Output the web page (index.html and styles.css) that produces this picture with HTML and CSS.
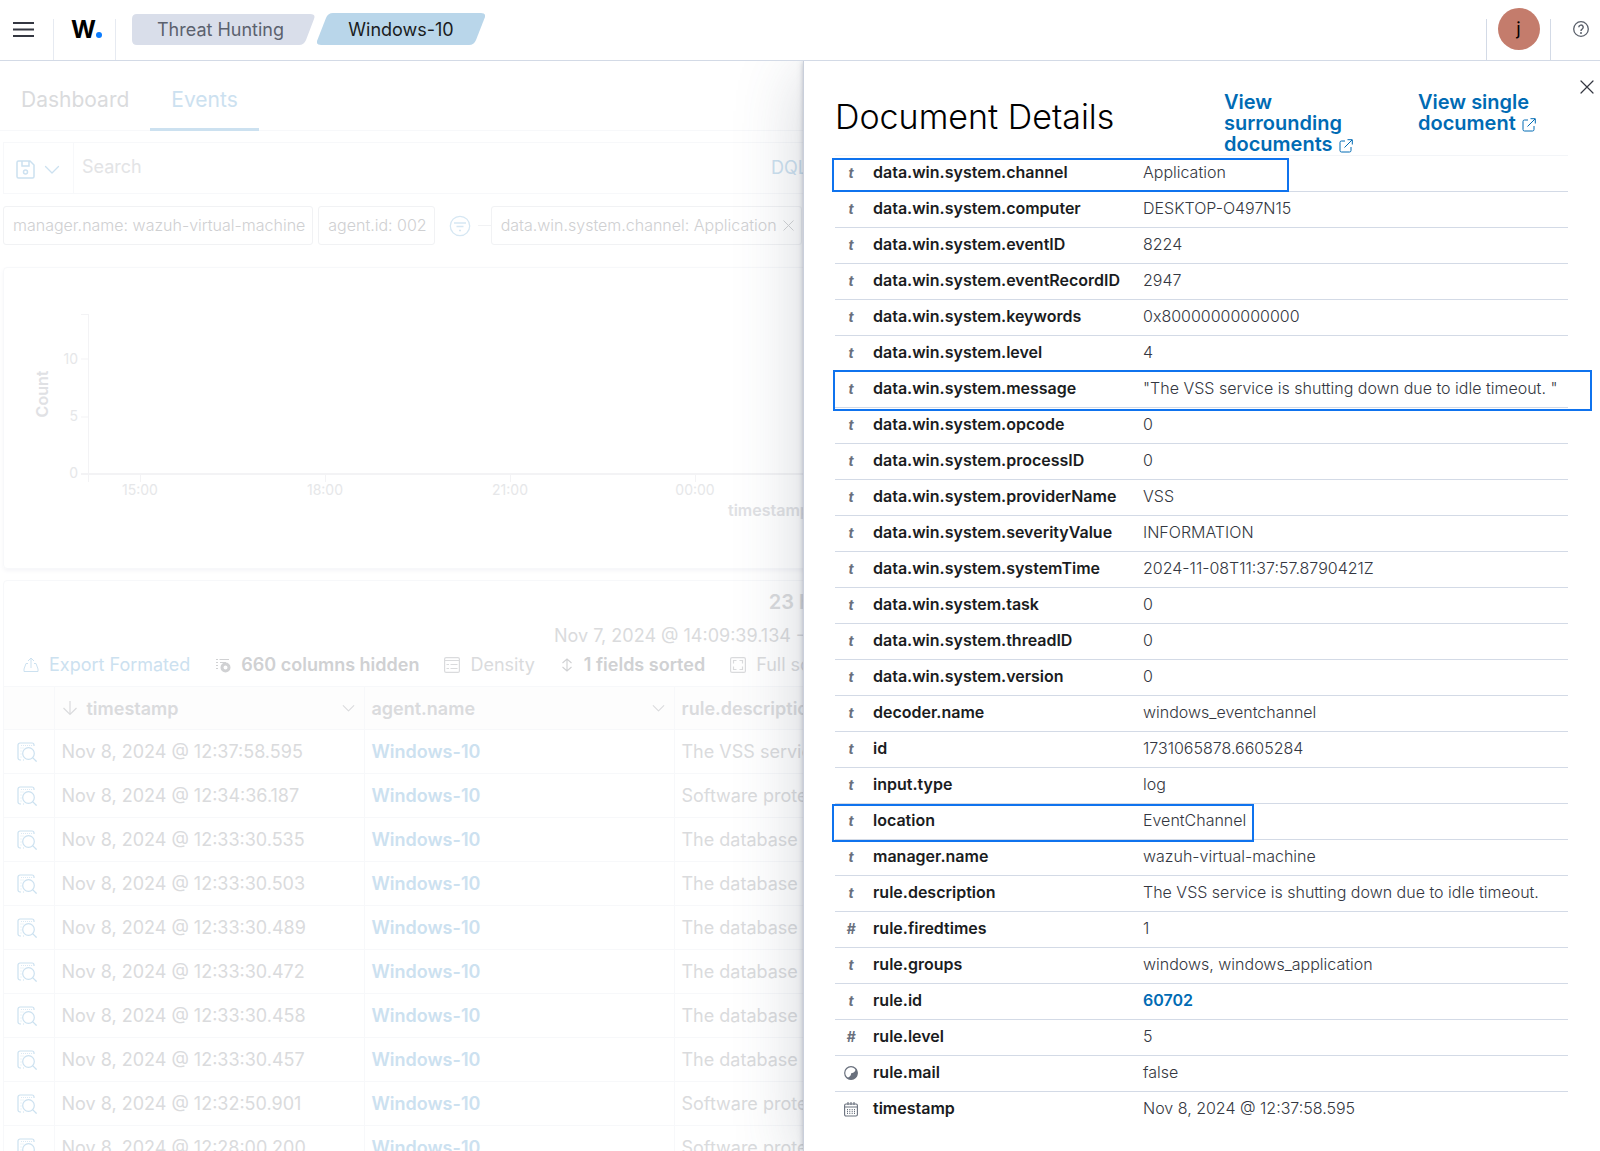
FILE: index.html
```html
<!DOCTYPE html>
<html lang="en">
<head>
<meta charset="utf-8">
<title>Threat Hunting - Windows-10</title>
<link rel="stylesheet" href="styles.css">
</head>
<body>
<svg class="sprite" aria-hidden="true">
  <symbol id="i-inspect" viewBox="0 0 20 20"><path d="M4 18H3a2 2 0 0 1-2-2V3a2 2 0 0 1 2-2h12a2 2 0 0 1 2 2v1M7 18H6" fill="none" stroke="currentColor" stroke-width="1.200"/><path d="M4 3.500h1m1 0h1m1 0h1m1 0h1m1 0h1m1 0h1M3.500 6h1m1 0h1M3.500 9h1M3.500 12h1M3.500 15h1" stroke="currentColor" stroke-width="1" opacity=".7"/><circle cx="11.500" cy="11.500" r="5.800" fill="none" stroke="currentColor" stroke-width="1.200"/><path d="m15.600 15.600 4 4" stroke="currentColor" stroke-width="1.300"/></symbol>
  <symbol id="i-chev" viewBox="0 0 16 10"><path d="m1.500 1.500 6.500 6.500 6.500-6.500" fill="none" stroke="currentColor" stroke-width="1.300" stroke-linecap="round" stroke-linejoin="round"/></symbol>
  <symbol id="i-out" viewBox="0 0 14 14"><path d="M6 2H2.500A1.500 1.500 0 0 0 1 3.500v8A1.500 1.500 0 0 0 2.500 13h8a1.500 1.500 0 0 0 1.500-1.500V8M8.500.7h4.800v4.800M13 1 5.500 8.500" fill="none" stroke="currentColor"/></symbol>
  <symbol id="i-x" viewBox="0 0 14 14"><path d="m1 1 12 12M13 1 1 13" fill="none" stroke="currentColor" stroke-width="1.200" stroke-linecap="round"/></symbol>
</svg>

<header class="top">
  <button class="menu" aria-label="Menu"><svg width="22" height="18" viewBox="0 0 22 18"><path d="M0 2h21M0 8.500h21M0 15h21" stroke="#343741" stroke-width="2"/></svg></button>
  <a class="logo" href="#" aria-label="Home">W<i></i></a>
  <nav class="crumbs">
    <a class="crumb" href="#"><svg viewBox="0 0 183 32" preserveAspectRatio="none"><path d="M5 1h173q6 0 4 5l-8 21q-2 5-7 5H5q-5 0-5-5V6q0-5 5-5z" fill="#d9deea"/></svg><span>Threat Hunting</span></a>
    <a class="crumb on" href="#"><svg viewBox="0 0 168 32" preserveAspectRatio="none"><path d="M16 0h148q5 0 4 4l-9 23q-2 5-7 5H4q-5 0-4-4L9 5q2-5 7-5z" fill="#b9d6ea"/></svg><span>Windows-10</span></a>
  </nav>
  <button class="user" aria-label="User"><span class="avatar">j</span></button>
  <button class="help" aria-label="Help"><svg width="16" height="16" viewBox="0 0 16 16"><circle cx="8" cy="8" r="7.300" fill="none" stroke="#5a606b" stroke-width="1.300"/><path d="M5.800 6.300a2.200 2.200 0 1 1 3.300 1.900Q8 8.800 8 9.900" fill="none" stroke="#5a606b" stroke-width="1.500"/><circle cx="8" cy="12" r="1" fill="#5a606b"/></svg></button>
</header>

<main class="page">
  <nav class="tabs"><a href="#">Dashboard</a><a class="on" href="#">Events</a></nav>

  <div class="search">
    <button class="saved" aria-label="Saved queries">
      <svg width="19" height="19" viewBox="0 0 19 19"><path d="M2.500 1H14l4 4v11.500a1.500 1.500 0 0 1-1.500 1.500h-14A1.500 1.500 0 0 1 1 16.500v-14A1.500 1.500 0 0 1 2.500 1zM6 1v5h7V1" fill="none" stroke="currentColor" stroke-width="1.500"/><circle cx="9.500" cy="12" r="2" fill="none" stroke="currentColor" stroke-width="1.500"/></svg>
      <svg width="16" height="10"><use href="#i-chev"/></svg>
    </button>
    <input type="text" placeholder="Search" aria-label="Search">
    <button class="dql">DQL</button>
  </div>

  <div class="filters">
    <span class="pill">manager.name: wazuh-virtual-machine</span>
    <span class="pill">agent.id: 002</span>
    <button class="fbtn" aria-label="Filter options"><svg width="22" height="22" viewBox="0 0 22 22"><circle cx="11" cy="11" r="9.700" fill="none" stroke="currentColor" stroke-width="1.300"/><path d="M5 8h12M7.500 11.500h7M10 15.500h2" stroke="currentColor" stroke-width="1.500"/></svg></button>
    <span class="dash"></span>
    <span class="pill">data.win.system.channel: Application <button aria-label="Remove filter"><svg width="11" height="11"><use href="#i-x"/></svg></button></span>
  </div>

  <section class="card chart">
    <svg width="1400" height="300" viewBox="0 0 1400 300">
      <path d="M84.500 46v160M77 46.500h7M77 91h7M77 149h7" stroke="#f3f3f5" fill="none"/>
      <path d="M77 206h1323" stroke="#f3f3f5" stroke-width="2"/>
      <path d="M84.500 206v8M136.500 206v8M321.500 206v8M506.500 206v8M691.500 206v8" stroke="#f3f3f5"/>
      <g class="tick"><text x="74" y="96" text-anchor="end">10</text><text x="74" y="153" text-anchor="end">5</text><text x="74" y="210" text-anchor="end">0</text></g>
      <g class="tick"><text x="136" y="227" text-anchor="middle">15:00</text><text x="321" y="227" text-anchor="middle">18:00</text><text x="506" y="227" text-anchor="middle">21:00</text><text x="691" y="227" text-anchor="middle">00:00</text></g>
      <g class="axis"><text x="-126" y="44" transform="rotate(-90)" text-anchor="middle">Count</text><text x="724" y="248">timestamp</text></g>
    </svg>
  </section>

  <section class="card grid">
    <h2>23 hits</h2>
    <p class="range">Nov 7, 2024 @ 14:09:39.134 - Nov 8, 2024 @ 14:09:39.134</p>
    <div class="tools">
      <button class="blue"><svg width="16" height="16" viewBox="0 0 16 16"><path d="M5 6.500H3L1 12v2.500h14V12l-2-5.500h-2M8 11V1M5 4l3-3 3 3" fill="none" stroke="currentColor"/></svg>Export Formated</button>
      <button class="strong"><svg width="16" height="16" viewBox="0 0 16 16"><path d="M1 2.500h2m1.500 0H14M1 5.500h2M1 8.500h2M1 11.500h2M5 5.500h6" stroke="currentColor" stroke-width="1.200"/><circle cx="10.500" cy="10.500" r="3.500" fill="none" stroke="currentColor" stroke-width="3"/></svg>660 columns hidden</button>
      <button><svg width="16" height="16" viewBox="0 0 16 16"><rect x=".6" y=".6" width="14.800" height="14.800" rx="1.500" fill="none" stroke="currentColor" stroke-width="1.200"/><path d="M1 3.500h14M2.500 7.500H5M6.500 7.500h7M2.500 11.500H5M6.500 11.500h7" stroke="currentColor"/></svg>Density</button>
      <button class="strong"><svg width="14" height="16" viewBox="0 0 14 16"><path d="M7 2.500v11M2.500 6 7 2l4.500 4M2.500 10 7 14l4.500-4" fill="none" stroke="currentColor" stroke-width="1.100"/></svg>1 fields sorted</button>
      <button><svg width="16" height="16" viewBox="0 0 16 16"><rect x=".6" y=".6" width="14.800" height="14.800" rx="1.500" fill="none" stroke="currentColor" stroke-width="1.200"/><path d="M3.500 6.500v-3h3M9.500 3.500h3v3M12.500 9.500v3h-3M6.500 12.500h-3v-3" fill="none" stroke="currentColor" stroke-width="1.200"/></svg>Full screen</button>
    </div>
    <table class="events">
      <colgroup><col class="c-act"><col class="c-std"><col class="c-std"><col></colgroup>
      <thead><tr><th></th>
        <th><div><svg width="16" height="16" viewBox="0 0 16 16"><path d="M8 1v13.500M1.500 8 8 14.500 14.500 8" fill="none" stroke="currentColor" stroke-width="1.200"/></svg>timestamp<svg class="end" width="13" height="9"><use href="#i-chev"/></svg></div></th>
        <th><div>agent.name<svg class="end" width="13" height="9"><use href="#i-chev"/></svg></div></th>
        <th><div>rule.description</div></th></tr></thead>
      <tbody>
        <tr><td><svg width="20" height="20"><use href="#i-inspect"/></svg></td><td>Nov 8, 2024 @ 12:37:58.595</td><td><a href="#">Windows-10</a></td><td>The VSS service</td></tr>
        <tr><td><svg width="20" height="20"><use href="#i-inspect"/></svg></td><td>Nov 8, 2024 @ 12:34:36.187</td><td><a href="#">Windows-10</a></td><td>Software protection</td></tr>
        <tr><td><svg width="20" height="20"><use href="#i-inspect"/></svg></td><td>Nov 8, 2024 @ 12:33:30.535</td><td><a href="#">Windows-10</a></td><td>The database</td></tr>
        <tr><td><svg width="20" height="20"><use href="#i-inspect"/></svg></td><td>Nov 8, 2024 @ 12:33:30.503</td><td><a href="#">Windows-10</a></td><td>The database</td></tr>
        <tr><td><svg width="20" height="20"><use href="#i-inspect"/></svg></td><td>Nov 8, 2024 @ 12:33:30.489</td><td><a href="#">Windows-10</a></td><td>The database</td></tr>
        <tr><td><svg width="20" height="20"><use href="#i-inspect"/></svg></td><td>Nov 8, 2024 @ 12:33:30.472</td><td><a href="#">Windows-10</a></td><td>The database</td></tr>
        <tr><td><svg width="20" height="20"><use href="#i-inspect"/></svg></td><td>Nov 8, 2024 @ 12:33:30.458</td><td><a href="#">Windows-10</a></td><td>The database</td></tr>
        <tr><td><svg width="20" height="20"><use href="#i-inspect"/></svg></td><td>Nov 8, 2024 @ 12:33:30.457</td><td><a href="#">Windows-10</a></td><td>The database</td></tr>
        <tr><td><svg width="20" height="20"><use href="#i-inspect"/></svg></td><td>Nov 8, 2024 @ 12:32:50.901</td><td><a href="#">Windows-10</a></td><td>Software protection</td></tr>
        <tr><td><svg width="20" height="20"><use href="#i-inspect"/></svg></td><td>Nov 8, 2024 @ 12:28:00.200</td><td><a href="#">Windows-10</a></td><td>Software protection</td></tr>
      </tbody>
    </table>
  </section>
</main>

<aside class="flyout">
  <button class="close" aria-label="Close"><svg width="14" height="14"><use href="#i-x"/></svg></button>
  <div class="fhead">
    <h1>Document Details</h1>
    <a href="#">View<br>surrounding<br>documents <svg width="14" height="14"><use href="#i-out"/></svg></a>
    <a href="#">View single<br>document <svg width="14" height="14"><use href="#i-out"/></svg></a>
  </div>
  <table class="doc">
    <colgroup><col class="d-icon"><col class="d-name"><col></colgroup>
    <tbody>
    <tr class="mark m-channel"><td>t</td><th scope="row">data.win.system.channel</th><td>Application</td></tr>
    <tr><td>t</td><th scope="row">data.win.system.computer</th><td>DESKTOP-O497N15</td></tr>
    <tr><td>t</td><th scope="row">data.win.system.eventID</th><td>8224</td></tr>
    <tr><td>t</td><th scope="row">data.win.system.eventRecordID</th><td>2947</td></tr>
    <tr><td>t</td><th scope="row">data.win.system.keywords</th><td>0x80000000000000</td></tr>
    <tr><td>t</td><th scope="row">data.win.system.level</th><td>4</td></tr>
    <tr class="mark m-message"><td>t</td><th scope="row">data.win.system.message</th><td>"The VSS service is shutting down due to idle timeout. "</td></tr>
    <tr><td>t</td><th scope="row">data.win.system.opcode</th><td>0</td></tr>
    <tr><td>t</td><th scope="row">data.win.system.processID</th><td>0</td></tr>
    <tr><td>t</td><th scope="row">data.win.system.providerName</th><td>VSS</td></tr>
    <tr><td>t</td><th scope="row">data.win.system.severityValue</th><td>INFORMATION</td></tr>
    <tr><td>t</td><th scope="row">data.win.system.systemTime</th><td>2024-11-08T11:37:57.8790421Z</td></tr>
    <tr><td>t</td><th scope="row">data.win.system.task</th><td>0</td></tr>
    <tr><td>t</td><th scope="row">data.win.system.threadID</th><td>0</td></tr>
    <tr><td>t</td><th scope="row">data.win.system.version</th><td>0</td></tr>
    <tr><td>t</td><th scope="row">decoder.name</th><td>windows_eventchannel</td></tr>
    <tr><td>t</td><th scope="row">id</th><td>1731065878.6605284</td></tr>
    <tr><td>t</td><th scope="row">input.type</th><td>log</td></tr>
    <tr class="mark m-location"><td>t</td><th scope="row">location</th><td>EventChannel</td></tr>
    <tr><td>t</td><th scope="row">manager.name</th><td>wazuh-virtual-machine</td></tr>
    <tr><td>t</td><th scope="row">rule.description</th><td>The VSS service is shutting down due to idle timeout.</td></tr>
    <tr><td>#</td><th scope="row">rule.firedtimes</th><td>1</td></tr>
    <tr><td>t</td><th scope="row">rule.groups</th><td>windows, windows_application</td></tr>
    <tr><td>t</td><th scope="row">rule.id</th><td><a href="#">60702</a></td></tr>
    <tr><td>#</td><th scope="row">rule.level</th><td>5</td></tr>
    <tr><td><svg width="14" height="14" viewBox="0 0 14 14"><circle cx="7" cy="7" r="6.300" fill="none" stroke="currentColor" stroke-width="1.200"/><path d="M11.800 2.200A6.800 6.800 0 0 1 2.200 11.800q4.500-.2 5-4.600 4.400-.6 4.600-5z" fill="currentColor"/></svg></td><th scope="row">rule.mail</th><td>false</td></tr>
    <tr><td><svg width="14" height="15" viewBox="0 0 14 15"><path d="M2 2h10q1.400 0 1.400 1.500v9q0 1.500-1.400 1.500H2Q.6 14 .6 12.500v-9Q.6 2 2 2zM.6 5h12.800M4 0v3M7 0v3M10 0v3" fill="none" stroke="currentColor" stroke-width="1.100"/><path d="M3.500 7v5M5.800 7v5M8.200 7v5M10.500 7v5" stroke="currentColor" stroke-dasharray="1.300 .7"/></svg></td><th scope="row">timestamp</th><td>Nov 8, 2024 @ 12:37:58.595</td></tr>
    </tbody>
  </table>
</aside>
</body>
</html>
```
FILE: styles.css
```css
:root {
  --line: #d3dae6;
  --faint-line: #f7f8fa;
  --faint: #dadbdd;
  --faint-strong: #d0d1d3;
  --faint-blue: #cce1f0;
  --blue: #006bb4;
  --mark: #0f73ee;
}
*, *::after { box-sizing: border-box; }
body {
  margin: 0;
  height: 100vh;
  overflow: hidden;
  position: relative;
  background: #fff;
  font-family: Inter, "Liberation Sans", sans-serif;
  font-size: 18px;
  color: #343741;
}
a { color: inherit; text-decoration: none; }
button { border: 0; padding: 0; background: none; font: inherit; color: inherit; }
table { border-collapse: collapse; table-layout: fixed; width: 100%; }
.sprite { display: none; }

/* top bar */
.top {
  height: 61px;
  display: flex;
  border-bottom: 1px solid var(--line);
}
.menu { width: 53px; padding: 0 0 0 13px; display: flex; align-items: center; }
.logo {
  width: 63px;
  height: 41px;
  align-self: flex-end;
  padding: 0 0 22px 17px;
  border: solid #e6eaf1;
  border-width: 0 1px;
  display: flex;
  align-items: flex-end;
  font-size: 24px;
  line-height: 16px;
  font-weight: 700;
  color: #000;
}
.logo i { width: 6px; height: 6px; border-radius: 50%; background: #0a7cff; }
.crumbs { display: flex; gap: 2px; margin: 13px auto 0 16px; }
.crumb {
  width: 183px;
  height: 32px;
  display: grid;
  place-items: center;
  padding-right: 6px;
  color: #5b616e;
  position: relative;
}
.crumb.on { width: 168px; padding: 0; color: #1a1c21; }
.crumb svg { position: absolute; inset: 0; width: 100%; height: 100%; }
.crumb span { position: relative; }
.user {
  width: 65px;
  height: 41px;
  align-self: flex-end;
  border: solid var(--line);
  border-width: 0 1px;
  display: flex;
  justify-content: center;
}
.avatar {
  flex: none;
  width: 42px;
  height: 42px;
  margin-top: -11px;
  border-radius: 50%;
  background: #c47c6c;
  color: #000;
  line-height: 42px;
}
.help { width: 49px; padding: 0 0 2px 13px; display: flex; align-items: center; }
.help svg { margin-left: 9px; }

/* dimmed page behind the flyout */
.page { color: var(--faint); }
.tabs {
  height: 70px;
  display: flex;
  border-bottom: 1px solid var(--faint-line);
  font-size: 21px;
  line-height: 78px;
}
.tabs a { padding: 0 21px; height: 70px; }
.tabs .on { color: var(--faint-blue); border-bottom: 3px solid var(--faint-blue); }
.search {
  width: calc(50% + 16px);
  height: 52px;
  margin: 11px 0 0 3px;
  border: 1px solid var(--faint-line);
  display: flex;
}
.saved {
  width: 70px;
  border-right: 1px solid var(--faint-line);
  padding: 3px 0 0 12px;
  display: flex;
  align-items: center;
  gap: 9px;
  color: var(--faint-blue);
}
.search input {
  flex: 1;
  min-width: 0;
  border: 0;
  padding: 0 8px 4px;
  background: none;
  font: inherit;
}
.search input::placeholder { color: #e3e4e6; opacity: 1; }
.dql { width: 47px; padding-bottom: 2px; text-align: left; color: var(--faint-blue); }
.filters { display: flex; align-items: center; margin: 12px 0 0 3px; white-space: nowrap; }
.pill {
  height: 39px;
  padding: 0 7px 0 9px;
  margin-right: 5px;
  border: 1px solid #f1f2f4;
  border-radius: 3px;
  font-size: 16px;
  font-weight: 300;
  line-height: 37px;
  color: #cfd0d2;
}
.pill button { margin-left: 2px; }
.fbtn { margin-left: 9px; display: flex; color: #d6e7f3; }
.dash { width: 13px; height: 1px; margin-left: 7px; background: #f1f2f4; }
.card {
  margin-left: 3px;
  border: 1px solid var(--faint-line);
  border-radius: 4px;
}
.chart { height: 302px; margin-top: 22px; box-shadow: 0 2px 4px #f5f5f8; overflow: hidden; }
.chart svg { display: block; }
.tick { font-size: 14px; fill: #e6e7e9; }
.axis { font-size: 16px; font-weight: 600; fill: #e0e1e4; }
.grid { margin-top: 11px; overflow: hidden; }
.grid h2 { margin: 8px 0 0; text-align: center; font-size: 20px; line-height: 26px; font-weight: 600; }
.range { margin: 9px 0 0; text-align: center; line-height: 24px; }
.tools { display: flex; gap: 25px; height: 38px; padding-left: 19px; line-height: 34px; }
.tools button { display: flex; align-items: center; gap: 10px; height: 34px; white-space: nowrap; }
.tools .strong { font-weight: 600; color: var(--faint-strong); }
.tools .blue { color: var(--faint-blue); }
.events { border-top: 1px solid var(--faint-line); }
.c-act { width: 50px; }
.c-std { width: 310px; }
.events th, .events td {
  height: 44px;
  padding: 0 7px;
  border: solid var(--faint-line);
  border-width: 0 1px 1px 0;
  text-align: left;
  white-space: nowrap;
}
.events th { height: 43px; background: #fdfdfd; font-weight: 600; }
.events th div { display: flex; align-items: center; gap: 9px; }
.events .end { margin: 0 2px 0 auto; }
.events td:first-child { padding-left: 13px; color: var(--faint-blue); }
.events td svg { display: block; }
.events a { color: var(--faint-blue); font-weight: 600; }

/* document flyout */
.flyout {
  position: absolute;
  top: 61px;
  right: 0;
  bottom: 0;
  width: calc(50% - 3px);
  padding: 31px 32px 0 31px;
  border-left: 1px solid #c9cfdb;
  background: #fff;
  box-shadow: 0 2px 4px -1px rgba(65, 78, 101, .2), 0 0 6px rgba(65, 78, 101, .25), 0 12px 64px rgba(65, 78, 101, .24);
  clip-path: inset(0 0 0 -80px);
}
.close { position: absolute; top: 19px; right: 6px; display: flex; }
.fhead {
  display: grid;
  grid-template-columns: 389px 194px 1fr;
  min-height: 63px;
  font-size: 20px;
  line-height: 21px;
  font-weight: 600;
  color: var(--blue);
}
.fhead h1 { margin: 0; font-size: 34px; line-height: 50px; font-weight: 300; color: #000; }
.fhead svg { vertical-align: -2px; margin-left: 1px; }
.doc { border-top: 1px solid #f3f5f8; font-size: 16px; }
.d-icon { width: 32px; }
.d-name { width: 270px; }
.doc td, .doc th {
  height: 36px;
  padding: 0 0 3px 6px;
  border-bottom: 1px solid var(--line);
  text-align: left;
  font-weight: 300;
  line-height: 20px;
  white-space: nowrap;
}
.doc tr:last-child > * { border-bottom: 0; }
.doc th { font-weight: 600; color: #1a1c21; }
.doc td:first-child {
  padding: 0 0 1px;
  text-align: center;
  font-size: 14px;
  font-weight: 700;
  font-style: italic;
  color: #69707d;
  position: relative;
}
.doc td svg { display: block; margin: 0 auto; }
.doc a { color: var(--blue); font-weight: 600; }

/* outlines drawn over the highlighted rows */
.mark td:first-child::after {
  content: "";
  position: absolute;
  left: -3px;
  top: 2px;
  height: 34px;
  border: 2px solid var(--mark);
}
.m-channel td:first-child::after { width: 457px; }
.m-message td:first-child::after { left: -2px; top: -2px; width: 759px; height: 41px; }
.m-location td:first-child::after { top: 0; width: 422px; height: 38px; }
```
